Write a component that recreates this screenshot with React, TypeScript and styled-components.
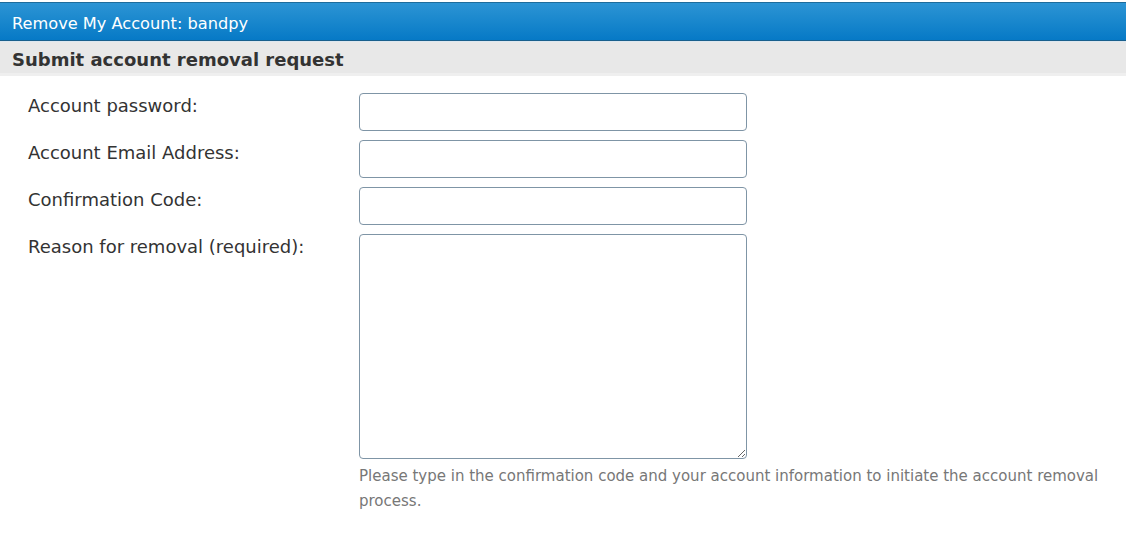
import * as React from 'react'
import styled, { createGlobalStyle } from 'styled-components'

const GlobalStyle = createGlobalStyle`
  html, body {
    margin: 0;
    padding: 0;
    background: #fff;
  }
  body {
    font-family: 'DejaVu Sans', Verdana, sans-serif;
  }
`

const Page = styled.div`
  width: 1126px;
  padding-top: 2px;
`

const TitleBar = styled.div`
  box-sizing: border-box;
  height: 39px;
  display: flex;
  align-items: center;
  padding: 4px 0 0 12px;
  background: linear-gradient(to bottom, #2c94d4 0%, #1987cd 50%, #0679c6 100%);
  border-top: 1px solid #1d6c9c;
  border-bottom: 1px solid #195f8c;
  color: #fff;
  font-size: 16.2px;
`

const SectionHead = styled.div`
  box-sizing: border-box;
  height: 35px;
  display: flex;
  align-items: center;
  padding: 4px 0 0 12px;
  background: #e8e8e8;
  border-top: 1px solid #dde7ef;
  border-bottom: 3px solid #efefef;
  color: #333;
  font-size: 18px;
  font-weight: bold;
`

const Form = styled.form`
  display: grid;
  grid-template-columns: 331px 388px;
  row-gap: 9px;
  padding: 17px 0 0 28px;
`

const Label = styled.label`
  color: #333;
  font-size: 18px;
  padding-top: 2px;
`

const TextInput = styled.input`
  box-sizing: border-box;
  width: 388px;
  height: 38px;
  margin: 0;
  border: 1px solid #7f95a6;
  border-radius: 4px;
  background: #fff;
  font-family: inherit;
  font-size: 15px;
  padding: 0 8px;
`

const TextArea = styled.textarea`
  box-sizing: border-box;
  display: block;
  width: 388px;
  height: 225px;
  margin: 0;
  border: 1px solid #7f95a6;
  border-radius: 4px;
  background: #fff;
  font-family: inherit;
  font-size: 15px;
  padding: 6px 8px;
`

const Help = styled.p`
  grid-column: 2;
  width: 750px;
  margin: -4px 0 0;
  color: #777;
  font-size: 15px;
  line-height: 25px;
`

const fields = [
  { id: 'password', label: 'Account password:', type: 'password' },
  { id: 'email', label: 'Account Email Address:', type: 'text' },
  { id: 'code', label: 'Confirmation Code:', type: 'text' },
]

const App = () => {
  return (
    <Page>
      <GlobalStyle />
      <TitleBar>Remove My Account: bandpy</TitleBar>
      <SectionHead>Submit account removal request</SectionHead>
      <Form onSubmit={(e) => e.preventDefault()}>
        {fields.map((f) => (
          <React.Fragment key={f.id}>
            <Label htmlFor={f.id}>{f.label}</Label>
            <TextInput id={f.id} type={f.type} />
          </React.Fragment>
        ))}
        <Label htmlFor="reason">Reason for removal (required):</Label>
        <TextArea id="reason" />
        <Help>
          Please type in the confirmation code and your account information to initiate the account removal process.
        </Help>
      </Form>
    </Page>
  )
}

export default App
